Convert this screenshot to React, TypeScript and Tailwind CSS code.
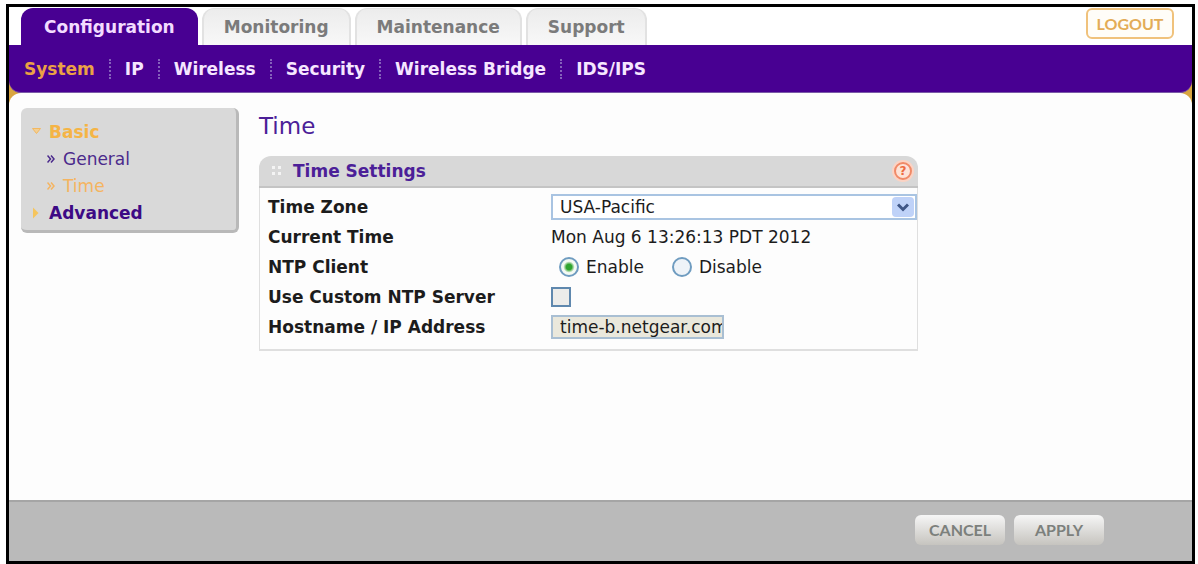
import React, { useState } from "react";

const tabs = ["Configuration", "Monitoring", "Maintenance", "Support"];
const sections = ["System", "IP", "Wireless", "Security", "Wireless Bridge", "IDS/IPS"];

function Tabs() {
  return (
    <nav aria-label="Main" className="flex items-end gap-1 pl-3">
      {tabs.map((tab, i) => (
        <a
          key={tab}
          href="#"
          className={
            i === 0
              ? "flex h-[37px] items-center rounded-t-xl bg-[#480092] px-[23px] text-[#f3dcff]"
              : "flex h-[37px] items-center rounded-t-xl border-x-2 border-t border-[#e2e2e2] bg-linear-to-b from-[#ececec] to-[#f8f8f8] px-5 text-[#7b7b7b]"
          }
        >
          {tab}
        </a>
      ))}
    </nav>
  );
}

function SectionNav() {
  return (
    <nav
      aria-label="Configuration"
      className="flex h-12 items-center gap-[14px] rounded-b-xl border-b border-[#7a5aa8] bg-[#480092] pl-[15px] text-[#f6e6ff]"
    >
      {sections.map((name, i) => (
        <React.Fragment key={name}>
          {i > 0 && <span className="h-5 border-l-2 border-dotted border-[#8560bb]" />}
          <a href="#" className={i === 0 ? "text-[#eba145]" : ""}>
            {name}
          </a>
        </React.Fragment>
      ))}
    </nav>
  );
}

function Chevrons() {
  return (
    <svg viewBox="0 0 8 8" className="h-2 w-2" fill="none" stroke="currentColor" strokeWidth="1.5" aria-hidden="true">
      <path d="M0.5 0.5 L3.5 4 L0.5 7.5 M4 0.5 L7 4 L4 7.5" />
    </svg>
  );
}

function Sidebar() {
  return (
    <aside className="w-[218px] shrink-0 rounded-md border-r-[3px] border-b-[3px] border-[#b9b9b9] bg-[#d9d9d9] pt-[10px] pb-1 pl-[11px]">
      <a href="#" className="flex h-[27px] items-center gap-2 font-bold text-[#f5b445]">
        <svg viewBox="0 0 9 9" className="h-[9px] w-[9px]" fill="#f3cf94" stroke="#f3b860" strokeWidth="1" aria-hidden="true">
          <path d="M0.5 1.5 H8.5 L4.5 6.5 Z" />
        </svg>
        Basic
      </a>
      <a href="#" className="flex h-[27px] items-center gap-2 pl-[15px] text-[#4b2a8c]">
        <Chevrons />
        General
      </a>
      <a href="#" className="flex h-[27px] items-center gap-2 pl-[15px] text-[#f5b460]">
        <Chevrons />
        Time
      </a>
      <a href="#" className="flex h-[27px] items-center gap-2 font-bold text-[#3d0a85]">
        <svg viewBox="0 0 9 12" className="h-3 w-[9px]" fill="#f5c55e" aria-hidden="true">
          <path d="M1 0.5 L6.5 6 L1 11.5 Z" />
        </svg>
        Advanced
      </a>
    </aside>
  );
}

const radio =
  "m-0 h-5 w-5 appearance-none rounded-full border-2 border-[#6f9cc0] bg-[#eef3f8] bg-radial checked:from-[#2fa52f] checked:from-25% checked:to-[#f4faf4] checked:to-50%";

function TimeSettings() {
  const [ntp, setNtp] = useState("enable");
  return (
    <section className="w-[659px] max-w-full">
      <div className="flex h-8 items-center rounded-t-xl border-b-2 border-[#c4c4c4] bg-[#d8d8d8] pr-1 pl-[13px]">
        <svg viewBox="0 0 10 10" className="mr-[11px] h-[10px] w-[10px]" fill="#f4f4f4" aria-hidden="true">
          <path d="M0 0h3v3H0z M6 0h3v3H6z M0 6h3v3H0z M6 6h3v3H6z" />
        </svg>
        <h2 className="flex-1 font-bold text-[#4c1f98]">Time Settings</h2>
        <button type="button" aria-label="Help" className="flex h-[22px] w-[22px] items-center justify-center rounded-full bg-[#fbd3c4]">
          <span className="flex h-[18px] w-[18px] items-center justify-center rounded-full border-2 border-[#f08a68] bg-[#fde3d8] text-[12px] leading-none font-bold text-[#ee6a40]">
            ?
          </span>
        </button>
      </div>
      <div className="border-x border-b-2 border-[#dfdfdf] pt-1 pb-[7px] pl-2">
        <table className="w-full border-collapse text-left">
          <tbody>
            <tr className="h-[30px]">
              <th scope="row" className="w-[283px] p-0">
                <label htmlFor="zone">Time Zone</label>
              </th>
              <td className="p-0">
                <div className="relative">
                  <select id="zone" className="block h-[26px] w-full appearance-none border-2 border-[#a9c4e2] bg-white pl-[7px] leading-[22px]">
                    <option>USA-Pacific</option>
                    <option>USA-Mountain</option>
                    <option>USA-Central</option>
                    <option>USA-Eastern</option>
                  </select>
                  <span className="pointer-events-none absolute top-[3px] right-[3px] flex h-5 w-[22px] items-center justify-center rounded-sm bg-[#bfd2f8]">
                    <svg viewBox="0 0 12 9" className="h-[9px] w-3" fill="none" stroke="#3f5686" strokeWidth="3" aria-hidden="true">
                      <path d="M1 1.5 L6 6.5 L11 1.5" />
                    </svg>
                  </span>
                </div>
              </td>
            </tr>
            <tr className="h-[30px]">
              <th scope="row" className="p-0">Current Time</th>
              <td className="p-0">Mon Aug 6 13:26:13 PDT 2012</td>
            </tr>
            <tr className="h-[30px]">
              <th scope="row" className="p-0">NTP Client</th>
              <td className="p-0">
                <div className="flex items-center gap-7 pl-2">
                  <label className="flex items-center gap-[7px]">
                    <input type="radio" name="ntp" className={radio} checked={ntp === "enable"} onChange={() => setNtp("enable")} />
                    Enable
                  </label>
                  <label className="flex items-center gap-[7px]">
                    <input type="radio" name="ntp" className={radio} checked={ntp === "disable"} onChange={() => setNtp("disable")} />
                    Disable
                  </label>
                </div>
              </td>
            </tr>
            <tr className="h-[30px]">
              <th scope="row" className="p-0">
                <label htmlFor="custom">Use Custom NTP Server</label>
              </th>
              <td className="p-0">
                <input
                  id="custom"
                  type="checkbox"
                  className="block h-5 w-5 appearance-none border-2 border-[#5f88ae] bg-[#ececea] checked:bg-[#2fa52f]"
                />
              </td>
            </tr>
            <tr className="h-[30px]">
              <th scope="row" className="p-0">
                <label htmlFor="host">Hostname / IP Address</label>
              </th>
              <td className="p-0">
                <input
                  id="host"
                  type="text"
                  readOnly
                  defaultValue="time-b.netgear.com"
                  className="block h-6 w-[173px] border-2 border-[#a9bfd3] bg-[#eae8dc] pl-[7px]"
                />
              </td>
            </tr>
          </tbody>
        </table>
      </div>
    </section>
  );
}

const action =
  "h-[30px] w-[90px] rounded-md bg-linear-to-b from-[#f6f6f6] to-[#c6c4bf] font-['Lato',sans-serif] text-[16px] font-bold text-[#7c807c]";

export default function App() {
  return (
    <div className="flex min-h-screen flex-col bg-white pt-1 pr-[3px] pl-[6px] font-['DejaVu_Sans',Verdana,sans-serif] text-[17px] leading-[22px] text-[#1c1c1c]">
      <div className="flex flex-1 flex-col border-[3px] border-black">
        <header>
          <div className="flex h-[38px] items-end justify-between pr-[18px] font-bold">
            <Tabs />
            <button
              type="button"
              className="mb-[6px] h-[31px] w-[88px] rounded-md border-2 border-[#f0c27c] bg-[#fffdf8] font-['Lato',sans-serif] text-[16px] font-bold text-[#e3ac57]"
            >
              LOGOUT
            </button>
          </div>
          <div className="bg-[#d9a540] font-bold">
            <SectionNav />
          </div>
        </header>
        <div className="flex flex-1 flex-col bg-linear-to-b from-[#d9a540] from-10% to-white to-10%">
          <main className="flex flex-1 gap-5 rounded-t-xl bg-[#fdfdfd] pt-[15px] pr-4 pl-3">
            <div>
              <Sidebar />
            </div>
            <div className="min-w-0 flex-1">
              <h1 className="mb-[14px] pt-[2px] text-[23px] leading-8 text-[#4c1f98]">Time</h1>
              <TimeSettings />
            </div>
          </main>
        </div>
        <footer className="flex h-[61px] items-center justify-end gap-[9px] border-t-2 border-[#a5a5a5] bg-[#bababa] pr-[88px] pb-[3px]">
          <button type="button" className={action}>CANCEL</button>
          <button type="button" className={action}>APPLY</button>
        </footer>
      </div>
    </div>
  );
}
